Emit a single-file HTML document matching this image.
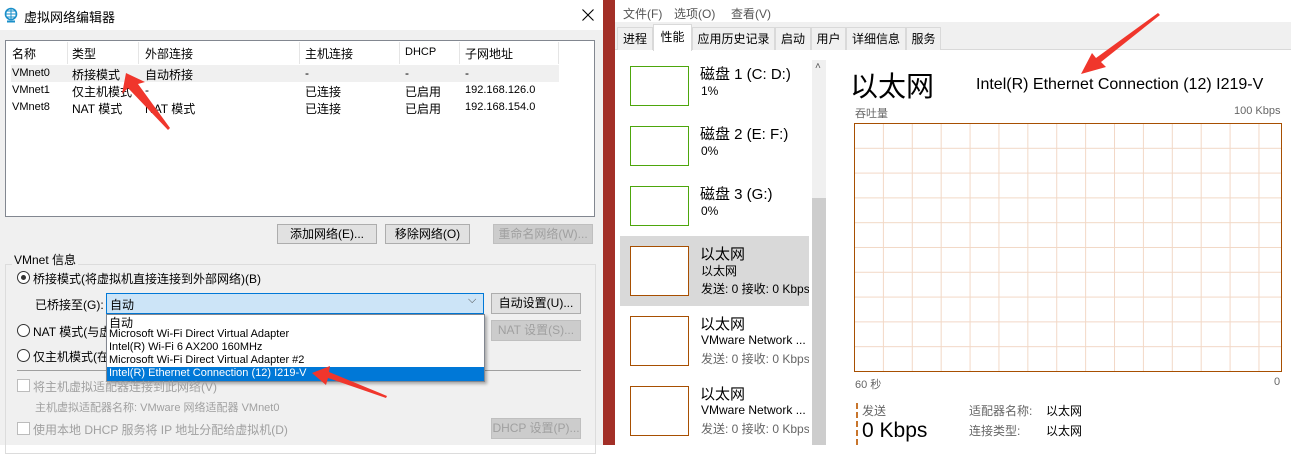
<!DOCTYPE html>
<html><head><meta charset="utf-8"><style>
*{margin:0;padding:0;box-sizing:border-box}
body{width:1291px;height:445px;overflow:hidden;position:relative;background:#fff;font-family:"Liberation Sans","Noto Sans CJK SC",sans-serif;font-size:12px;color:#000}
.a{position:absolute;white-space:nowrap}
.btn{position:absolute;background:#e1e1e1;border:1px solid #adadad;text-align:center;line-height:18px;font-size:12px}
.dis{color:#a0a0a0;background:#ccc;border-color:#bfbfbf}
.radio{position:absolute;width:13px;height:13px;border:1px solid #333;border-radius:50%;background:#fff}
.chk{position:absolute;width:13px;height:13px;border:1px solid #bcbcbc;background:#fff}
.tab{position:absolute;top:27px;height:23px;border:1px solid #d9d9d9;border-bottom:none;background:#f0f0f0;font-size:12px;text-align:center;line-height:22px}
.th{position:absolute;width:59px;border:1px solid #a74f01;background:#fff}
.t1{font-size:15px}
.g{color:#666}
</style></head><body>
<div class="a" style="left:0;top:0;width:603px;height:445px;background:#f0f0f0"></div>
<div class="a" style="left:0;top:0;width:603px;height:30px;background:#fff"></div>
<svg class="a" style="left:4px;top:7px" width="14" height="16" viewBox="0 0 14 16"><circle cx="7" cy="7" r="5.5" fill="none" stroke="#1a8fc9" stroke-width="1.6"/><path d="M1.5 7h11M7 1.5v11M3 4h8M3 10h8" stroke="#1a8fc9" stroke-width="1"/><rect x="3" y="13.5" width="8" height="2" fill="#1a8fc9"/></svg>
<div class="a" style="left:24px;top:7px;font-size:13px">虚拟网络编辑器</div>
<svg class="a" style="left:582px;top:9px" width="12" height="12"><path d="M0.5 0.5L11.5 11.5M11.5 0.5L0.5 11.5" stroke="#000" stroke-width="1.1"/></svg>
<div class="a" style="left:5px;top:40px;width:590px;height:177px;background:#fff;border:1px solid #828790"></div>
<div class="a" style="left:67px;top:42px;width:1px;height:22px;background:#e5e5e5"></div>
<div class="a" style="left:138px;top:42px;width:1px;height:22px;background:#e5e5e5"></div>
<div class="a" style="left:299px;top:42px;width:1px;height:22px;background:#e5e5e5"></div>
<div class="a" style="left:399px;top:42px;width:1px;height:22px;background:#e5e5e5"></div>
<div class="a" style="left:459px;top:42px;width:1px;height:22px;background:#e5e5e5"></div>
<div class="a" style="left:558px;top:42px;width:1px;height:22px;background:#e5e5e5"></div>
<div class="a" style="left:12px;top:45px">名称</div><div class="a" style="left:72px;top:45px">类型</div><div class="a" style="left:145px;top:45px">外部连接</div><div class="a" style="left:305px;top:45px">主机连接</div><div class="a" style="left:405px;top:46px;font-size:11px">DHCP</div><div class="a" style="left:465px;top:45px">子网地址</div>
<div class="a" style="left:11px;top:65px;width:548px;height:17px;background:#f0f0f0"></div>
<div class="a" style="left:12px;top:67px;font-size:11px">VMnet0</div><div class="a" style="left:72px;top:66px">桥接模式</div><div class="a" style="left:145px;top:66px">自动桥接</div><div class="a" style="left:305px;top:66px">-</div><div class="a" style="left:405px;top:66px">-</div><div class="a" style="left:465px;top:66px">-</div>
<div class="a" style="left:12px;top:84px;font-size:11px">VMnet1</div><div class="a" style="left:72px;top:83px">仅主机模式</div><div class="a" style="left:145px;top:83px">-</div><div class="a" style="left:305px;top:83px">已连接</div><div class="a" style="left:405px;top:83px">已启用</div><div class="a" style="left:465px;top:84px;font-size:11px">192.168.126.0</div>
<div class="a" style="left:12px;top:101px;font-size:11px">VMnet8</div><div class="a" style="left:72px;top:100px">NAT 模式</div><div class="a" style="left:145px;top:100px">NAT 模式</div><div class="a" style="left:305px;top:100px">已连接</div><div class="a" style="left:405px;top:100px">已启用</div><div class="a" style="left:465px;top:101px;font-size:11px">192.168.154.0</div>
<div class="btn" style="left:277px;top:224px;width:100px;height:20px">添加网络(E)...</div>
<div class="btn" style="left:385px;top:224px;width:85px;height:20px">移除网络(O)</div>
<div class="btn dis" style="left:493px;top:224px;width:100px;height:20px">重命名网络(W)...</div>
<div class="a" style="left:5px;top:264px;width:591px;height:190px;border:1px solid #dcdcdc"></div>
<div class="a" style="left:12px;top:251px;background:#f0f0f0;padding:0 2px">VMnet 信息</div>
<div class="radio" style="left:17px;top:271px"></div><div class="a" style="left:21px;top:275px;width:5px;height:5px;background:#333;border-radius:50%"></div>
<div class="a" style="left:33px;top:270px">桥接模式(将虚拟机直接连接到外部网络)(B)</div>
<div class="a" style="left:35px;top:296px">已桥接至(G):</div>
<div class="a" style="left:106px;top:293px;width:378px;height:21px;background:#cce4f7;border:1px solid #0078d7"></div>
<div class="a" style="left:110px;top:296px">自动</div>
<div class="a" style="left:468px;top:294px;color:#444;font-size:11px">⌵</div>
<div class="btn" style="left:491px;top:293px;width:90px;height:21px">自动设置(U)...</div>
<div class="btn dis" style="left:491px;top:320px;width:90px;height:21px">NAT 设置(S)...</div>
<div class="radio" style="left:17px;top:324px"></div><div class="a" style="left:33px;top:323px">NAT 模式(与虚</div>
<div class="radio" style="left:17px;top:349px"></div><div class="a" style="left:33px;top:348px">仅主机模式(在</div>
<div class="a" style="left:17px;top:370px;width:564px;height:1px;background:#a0a0a0"></div>
<div class="a" style="left:106px;top:314px;width:379px;height:68px;background:#fff;border:1px solid #828790;box-shadow:2px 2px 3px rgba(0,0,0,.3)"></div>
<div class="a" style="left:109px;top:314px">自动</div>
<div class="a" style="left:109px;top:328px;font-size:11px">Microsoft Wi-Fi Direct Virtual Adapter</div>
<div class="a" style="left:109px;top:341px;font-size:11px">Intel(R) Wi-Fi 6 AX200 160MHz</div>
<div class="a" style="left:109px;top:354px;font-size:11px">Microsoft Wi-Fi Direct Virtual Adapter #2</div>
<div class="a" style="left:107px;top:367px;width:377px;height:14px;background:#0078d7"></div>
<div class="a" style="left:109px;top:367px;font-size:11px;color:#fff">Intel(R) Ethernet Connection (12) I219-V</div>
<div class="chk" style="left:17px;top:379px"></div><div class="a" style="left:33px;top:378px;color:#a0a0a0">将主机虚拟适配器连接到此网络(V)</div>
<div class="a" style="left:35px;top:399px;color:#a0a0a0;font-size:11px">主机虚拟适配器名称: VMware 网络适配器 VMnet0</div>
<div class="chk" style="left:17px;top:422px"></div><div class="a" style="left:33px;top:421px;color:#a0a0a0">使用本地 DHCP 服务将 IP 地址分配给虚拟机(D)</div>
<div class="btn dis" style="left:491px;top:418px;width:90px;height:21px">DHCP 设置(P)...</div>
<div class="a" style="left:603px;top:0;width:12px;height:445px;background:#a22f27"></div>
<div class="a" style="left:615px;top:0;width:676px;height:23px;background:#fff"></div>
<div class="a" style="left:623px;top:5px;color:#555">文件(F)</div><div class="a" style="left:674px;top:5px;color:#555">选项(O)</div><div class="a" style="left:731px;top:5px;color:#555">查看(V)</div>
<div class="a" style="left:615px;top:22px;width:676px;height:28px;background:#f0f0f0;border-bottom:1px solid #d9d9d9"></div>
<div class="tab" style="left:617px;width:36px">进程</div>
<div class="tab" style="left:653px;top:24px;height:27px;width:39px;background:#fff;line-height:24px">性能</div>
<div class="tab" style="left:692px;width:83px">应用历史记录</div>
<div class="tab" style="left:775px;width:36px">启动</div>
<div class="tab" style="left:811px;width:35px">用户</div>
<div class="tab" style="left:846px;width:60px">详细信息</div>
<div class="tab" style="left:906px;width:35px">服务</div>
<div class="a" style="left:615px;top:51px;width:676px;height:394px;background:#fff"></div>
<div class="a" style="left:812px;top:60px;width:14px;height:385px;background:#f0f0f0"></div>
<div class="a" style="left:812px;top:198px;width:14px;height:247px;background:#cdcdcd"></div>
<div class="a" style="left:815px;top:61px;font-size:10px;color:#555">˄</div>
<div class="a" style="left:620px;top:236px;width:189px;height:70px;background:#d9d9d9"></div>
<div class="th" style="left:630px;top:66px;height:40px;border-color:#4da60c"></div>
<div class="a t1" style="left:700px;top:63px">磁盘 1 (C: D:)</div><div class="a" style="left:701px;top:84px">1%</div>
<div class="th" style="left:630px;top:126px;height:40px;border-color:#4da60c"></div>
<div class="a t1" style="left:700px;top:123px">磁盘 2 (E: F:)</div><div class="a" style="left:701px;top:144px">0%</div>
<div class="th" style="left:630px;top:186px;height:40px;border-color:#4da60c"></div>
<div class="a t1" style="left:700px;top:183px">磁盘 3 (G:)</div><div class="a" style="left:701px;top:204px">0%</div>
<div class="th" style="left:630px;top:246px;height:50px"></div>
<div class="a t1" style="left:700px;top:243px">以太网</div><div class="a" style="left:701px;top:262px">以太网</div><div class="a" style="left:701px;top:280px;width:108px;overflow:hidden">发送: 0 接收: 0 Kbps</div>
<div class="th" style="left:630px;top:316px;height:50px"></div>
<div class="a t1" style="left:700px;top:313px">以太网</div><div class="a" style="left:701px;top:333px;width:108px;overflow:hidden">VMware Network ...</div><div class="a g" style="left:701px;top:350px;width:108px;overflow:hidden">发送: 0 接收: 0 Kbps</div>
<div class="th" style="left:630px;top:386px;height:50px"></div>
<div class="a t1" style="left:700px;top:383px">以太网</div><div class="a" style="left:701px;top:403px;width:108px;overflow:hidden">VMware Network ...</div><div class="a g" style="left:701px;top:420px;width:108px;overflow:hidden">发送: 0 接收: 0 Kbps</div>
<div class="a" style="left:850px;top:65px;font-size:28px">以太网</div>
<div class="a" style="left:976px;top:76px;font-size:16px">Intel(R) Ethernet Connection (12) I219-V</div>
<div class="a g" style="left:855px;top:105px;font-size:11px">吞吐量</div>
<div class="a g" style="left:1234px;top:105px;font-size:11px">100 Kbps</div>
<div class="a" style="left:854px;top:123px;width:428px;height:249px;border:1px solid #a74f01;background-image:linear-gradient(to right,#f2d8c6 1px,transparent 1px),linear-gradient(to bottom,#f2d8c6 1px,transparent 1px);background-size:28.9px 24.8px;background-position:-1px -1px"></div>
<div class="a g" style="left:855px;top:376px;font-size:11px">60 秒</div>
<div class="a g" style="left:1274px;top:376px;font-size:11px">0</div>
<div class="a" style="left:856px;top:403px;width:0;height:42px;border-left:2px dashed #c8752c"></div>
<div class="a g" style="left:862px;top:402px">发送</div>
<div class="a" style="left:862px;top:419px;font-size:21px">0 Kbps</div>
<div class="a g" style="left:969px;top:402px">适配器名称:</div><div class="a" style="left:1046px;top:402px">以太网</div>
<div class="a g" style="left:969px;top:422px">连接类型:</div><div class="a" style="left:1046px;top:422px">以太网</div>
<svg class="a" style="left:0;top:0" width="1291" height="445">
<g fill="#f0362c">
<polygon points="168,130 128,88 122,94 126,73 145,82 138,84 170,128"/>
<polygon points="386,398 328,378 326,385 312,373 330,366 329,372 387,396"/>
<polygon points="1160,15 1101,62 1106,67 1081,74 1092,53 1096,58 1158,13"/>
</g>
</svg>
</body></html>
